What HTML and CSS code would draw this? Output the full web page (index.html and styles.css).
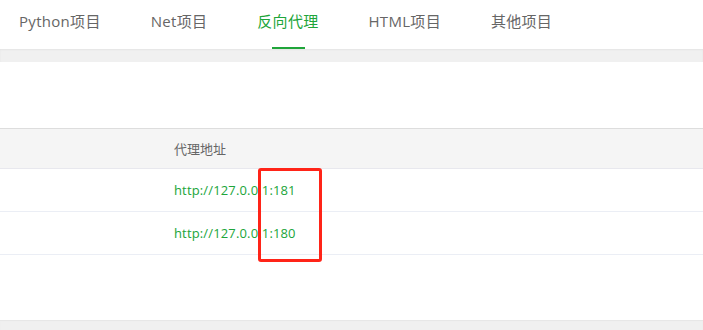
FILE: index.html
```html
<!DOCTYPE html>
<html lang="zh-CN">
<head>
<meta charset="utf-8">
<title>反向代理</title>
<link rel="stylesheet" href="styles.css">
</head>
<body>
<nav class="tabs">
  <span class="tab">Python项目</span>
  <span class="tab">Net项目</span>
  <span class="tab active">反向代理</span>
  <span class="tab">HTML项目</span>
  <span class="tab">其他项目</span>
</nav>
<div class="gap"></div>
<main class="panel">
  <div class="spacer"></div>
  <div class="table">
    <div class="row head">
      <div class="cell"></div>
      <div class="cell">代理地址</div>
    </div>
    <div class="row">
      <div class="cell"></div>
      <div class="cell link">http://127.0.0.1:181</div>
    </div>
    <div class="row">
      <div class="cell"></div>
      <div class="cell link">http://127.0.0.1:180</div>
    </div>
    <div class="mark"></div>
  </div>
</main>
<div class="gap bottom"></div>
</body>
</html>
```
FILE: styles.css
```css
html, body {
  margin: 0;
  padding: 0;
  background: #fff;
  font-family: "Open Sans", "Noto Sans CJK SC", sans-serif;
  overflow: hidden;
}
.tabs {
  display: flex;
  height: 49px;
  padding-left: 19px;
  gap: 50px;
  align-items: stretch;
  background: #fff;
}
.tab {
  position: relative;
  display: flex;
  align-items: center;
  padding-bottom: 8px;
  font-size: 15px;
  letter-spacing: 0.3px;
  color: #666;
  white-space: nowrap;
}
.tab.active {
  color: #20a53a;
}
.tab.active::after {
  content: "";
  position: absolute;
  left: 50%;
  bottom: 0;
  width: 33px;
  height: 2px;
  margin-left: -16px;
  background: #20a53a;
}
.gap {
  height: 13px;
  background: #f0f0f0;
  box-shadow: inset 0 1px 2px rgba(0,0,0,0.05);
}
.gap.bottom {
  height: 10px;
  box-shadow: inset 0 1px 1px rgba(0,0,0,0.04);
}
.panel {
  height: 258px;
  background: #fff;
}
.spacer {
  height: 66px;
}
.table {
  position: relative;
  font-size: 13px;
}
.row {
  display: grid;
  grid-template-columns: 159px 1fr;
  height: 42px;
  border-bottom: 1px solid #ebeef5;
  align-items: center;
}
.row.head {
  height: 39px;
  background: #f5f5f5;
  border-top: 1px solid #ddd;
  border-bottom: 1px solid #e8e8ee;
  color: #666;
}
.cell {
  padding-left: 15px;
}
.link {
  color: #20a53a;
  letter-spacing: 0.15px;
}
.mark {
  position: absolute;
  left: 258px;
  top: 40px;
  width: 58px;
  height: 88px;
  border: 3px solid #ff2418;
  border-radius: 3px;
}
```
